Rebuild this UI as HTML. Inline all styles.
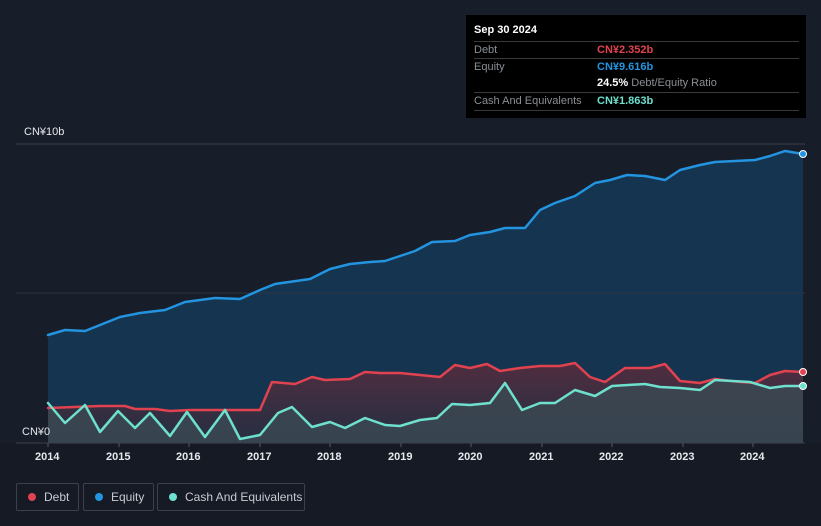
<!DOCTYPE html>
<html><head><meta charset="utf-8"><style>
body{margin:0;background:#151a24;font-family:"Liberation Sans",sans-serif;}
.wrap{position:relative;width:821px;height:526px;overflow:hidden;background:#151a24}
.tip{position:absolute;left:466px;top:15px;width:340px;height:103px;background:#000;font-size:11px;color:#fff}
.row{position:absolute;left:8px;width:325px;border-top:1px solid #3a3a3a;height:17px;line-height:17px;color:#8a8f96}
.row span{position:absolute;left:123px}
.leg{position:absolute;top:483px;height:26px;border:1px solid #3a414c;border-radius:2px;color:#c7cbd1;font-size:12px;line-height:26px}
.leg i{position:absolute;left:11px;top:9px;width:8px;height:8px;border-radius:50%}
.leg b{font-weight:normal;position:absolute;left:27px}
.ax{position:absolute;top:451px;font-size:11px;color:#e6e8eb;font-weight:bold}
polyline{stroke-linejoin:round;stroke-linecap:round}
</style></head><body><div class="wrap">
<svg width="821" height="526" style="position:absolute;left:0;top:0">
<defs><linearGradient id="d" x1="0" y1="0" x2="0" y2="1"><stop offset="0" stop-color="#6b2a3a" stop-opacity=".7"/><stop offset="1" stop-color="#3a2a35" stop-opacity=".5"/></linearGradient></defs>
<rect x="0" y="0" width="821" height="443" fill="#171d29"/>
<polygon fill="#15344f" points="48,335 65,330 85,331 100,325 120,317 140,313 165,310 185,302 215,298 240,299 260,290 275,284 310,279 330,269 350,264 370,262 385,261 400,256 415,251 432,242 455,241 470,235 490,232 505,228 525,228 540,210 555,203 575,196 595,183 610,180 627,175 645,176 665,180 680,170 700,165 715,162 735,161 755,160 770,156 785,151 803,154 803,443 48,443"/>
<polygon fill="url(#d)" points="48,408 100,406 125,406 135,409 155,409 170,411 190,410 260,410 272,382 295,384 312,377 325,380 350,379 365,372 380,373 400,373 420,375 440,377 455,365 470,368 487,364 500,371 520,368 540,366 560,366 575,363 590,377 605,382 625,368 650,368 665,364 680,381 700,383 715,379 740,382 755,383 770,375 785,371 803,372 803,443 48,443"/>
<polygon fill="#3b4a52" fill-opacity=".8" points="48,403 65,423 85,405 100,432 118,411 135,428 150,413 170,436 187,412 205,437 225,410 240,439 260,435 278,413 292,407 312,427 330,422 345,428 365,418 385,425 400,426 420,420 437,418 452,404 470,405 490,403 505,383 522,410 540,403 555,403 575,390 595,396 612,386 645,384 660,387 680,388 700,390 715,380 750,382 770,388 785,386 803,386 803,443 48,443"/>
<line x1="16" y1="144" x2="805" y2="144" stroke="#3a404a"/>
<line x1="16" y1="293" x2="805" y2="293" stroke="#2f3540"/>
<line x1="16" y1="443" x2="805" y2="443" stroke="#3a404a"/>
<polyline fill="none" stroke="#2394df" stroke-width="2.5" points="48,335 65,330 85,331 100,325 120,317 140,313 165,310 185,302 215,298 240,299 260,290 275,284 310,279 330,269 350,264 370,262 385,261 400,256 415,251 432,242 455,241 470,235 490,232 505,228 525,228 540,210 555,203 575,196 595,183 610,180 627,175 645,176 665,180 680,170 700,165 715,162 735,161 755,160 770,156 785,151 803,154"/>
<polyline fill="none" stroke="#e0424f" stroke-width="2.5" points="48,408 100,406 125,406 135,409 155,409 170,411 190,410 260,410 272,382 295,384 312,377 325,380 350,379 365,372 380,373 400,373 420,375 440,377 455,365 470,368 487,364 500,371 520,368 540,366 560,366 575,363 590,377 605,382 625,368 650,368 665,364 680,381 700,383 715,379 740,382 755,383 770,375 785,371 803,372"/>
<polyline fill="none" stroke="#6ee0cd" stroke-width="2.5" points="48,403 65,423 85,405 100,432 118,411 135,428 150,413 170,436 187,412 205,437 225,410 240,439 260,435 278,413 292,407 312,427 330,422 345,428 365,418 385,425 400,426 420,420 437,418 452,404 470,405 490,403 505,383 522,410 540,403 555,403 575,390 595,396 612,386 645,384 660,387 680,388 700,390 715,380 750,382 770,388 785,386 803,386"/>
<circle cx="803" cy="154" r="3.5" fill="#2394df" stroke="#fff"/>
<circle cx="803" cy="372" r="3.5" fill="#e0424f" stroke="#fff"/>
<circle cx="803" cy="386" r="3.5" fill="#6ee0cd" stroke="#fff"/>
<g stroke="#555c66"><line x1="48" y1="443" x2="48" y2="447"/><line x1="119" y1="443" x2="119" y2="447"/><line x1="189" y1="443" x2="189" y2="447"/><line x1="260" y1="443" x2="260" y2="447"/><line x1="330" y1="443" x2="330" y2="447"/><line x1="401" y1="443" x2="401" y2="447"/><line x1="471" y1="443" x2="471" y2="447"/><line x1="542" y1="443" x2="542" y2="447"/><line x1="612" y1="443" x2="612" y2="447"/><line x1="683" y1="443" x2="683" y2="447"/><line x1="753" y1="443" x2="753" y2="447"/></g>
<text x="24" y="135" fill="#e6e8eb" font-size="11">CN¥10b</text>
<text x="22" y="435" fill="#e6e8eb" font-size="11">CN¥0</text>
</svg>
<div class="ax" style="left:35px">2014</div><div class="ax" style="left:106px">2015</div><div class="ax" style="left:176px">2016</div><div class="ax" style="left:247px">2017</div><div class="ax" style="left:317px">2018</div><div class="ax" style="left:388px">2019</div><div class="ax" style="left:458px">2020</div><div class="ax" style="left:529px">2021</div><div class="ax" style="left:599px">2022</div><div class="ax" style="left:670px">2023</div><div class="ax" style="left:740px">2024</div>
<div class="tip">
<div style="position:absolute;left:8px;top:9px;font-weight:bold">Sep 30 2024</div>
<div class="row" style="top:26px">Debt<span style="color:#e0424f;font-weight:bold">CN¥2.352b</span></div>
<div class="row" style="top:43px">Equity<span style="color:#2394df;font-weight:bold">CN¥9.616b</span></div>
<div class="row" style="top:60px;border-top:none"><span><b style="color:#fff">24.5%</b> Debt/Equity Ratio</span></div>
<div class="row" style="top:77px;border-bottom:1px solid #3a3a3a">Cash And Equivalents<span style="color:#6ee0cd;font-weight:bold">CN¥1.863b</span></div>
</div>
<div class="leg" style="left:16px;width:61px"><i style="background:#e0424f"></i><b>Debt</b></div>
<div class="leg" style="left:83px;width:69px"><i style="background:#2394df"></i><b>Equity</b></div>
<div class="leg" style="left:157px;width:146px"><i style="background:#6ee0cd"></i><b>Cash And Equivalents</b></div>
</div></body></html>
